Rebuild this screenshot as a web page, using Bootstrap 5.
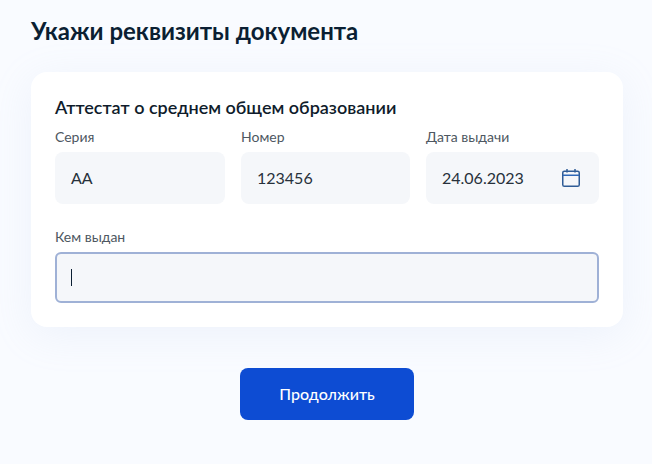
<!DOCTYPE html>
<html lang="ru">
<head>
<meta charset="utf-8">
<title>Реквизиты документа</title>
<link href="https://cdn.jsdelivr.net/npm/bootstrap@5.3.0/dist/css/bootstrap.min.css" rel="stylesheet">
<style>
html, body { height: 100%; }
body { background: #f9fbff; font-family: Lato, "Noto Sans", sans-serif; color: #0b1f33; overflow: hidden; }
.page-wrap { padding: 16px 29px 0 31px; }
.page-title { font-size: 24px; font-weight: 700; line-height: 30px; margin: 0 0 26px; color: #0b1f33; }
.doc-card { background: #fff; border-radius: 16px; padding: 24px; height: 255px; box-shadow: 0 8px 40px rgba(171,190,230,.14); }
.doc-title { font-size: 18px; font-weight: 600; line-height: 22px; margin: 0 0 10px; color: #0f1c2b; }
.fld-label { display: block; font-size: 14px; line-height: 18px; margin: 0 0 6px; color: #4d5761; }
.fld-input { height: 52px; background: #f5f7fa; border-radius: 8px; padding: 0 19px 0 16px; font-size: 16px; color: #27313b; display: flex; align-items: center; justify-content: space-between; }
.col-a { flex: 170 1 0; }
.col-b { flex: 169 1 0; }
.col-c { flex: 173 1 0; }
.fld-focus { height: 51px; background: #f5f7fa; border: 2px solid #9fb1d6; border-radius: 6px; padding: 0 14px; display: flex; align-items: center; }
.text-caret { display: block; width: 1px; height: 17px; background: #0b1f33; }
.row-gap { margin-bottom: 24px; }
.cal-icon { width: 18px; height: 18px; display: block; }
.go-btn { width: 174px; height: 52px; background: #0d4cd3; border: 0; border-radius: 8px; color: #fff; font-size: 16px; font-weight: 500; font-family: inherit; margin-top: 41px; }
.go-btn:hover { background: #0d4cd3; color: #fff; }
</style>
</head>
<body>
<div class="page-wrap">
  <h1 class="page-title">Укажи реквизиты документа</h1>
  <div class="doc-card">
    <h2 class="doc-title">Аттестат о среднем общем образовании</h2>
    <div class="d-flex gap-3 row-gap">
      <div class="col-a">
        <label class="fld-label">Серия</label>
        <div class="fld-input">АА</div>
      </div>
      <div class="col-b">
        <label class="fld-label">Номер</label>
        <div class="fld-input">123456</div>
      </div>
      <div class="col-c">
        <label class="fld-label">Дата выдачи</label>
        <div class="fld-input">
          <span>24.06.2023</span>
          <svg class="cal-icon" viewBox="0 0 18 18" fill="none" aria-hidden="true">
            <rect x="0.75" y="2.25" width="16.5" height="15" rx="1.6" stroke="#2f5c96" stroke-width="1.5"/>
            <path d="M1 6.25H17" stroke="#2f68b8" stroke-width="1.5"/>
            <path d="M5 0V3.5M13 0V3.5" stroke="#2f5c96" stroke-width="1.5"/>
          </svg>
        </div>
      </div>
    </div>
    <label class="fld-label">Кем выдан</label>
    <div class="fld-focus"><span class="text-caret"></span></div>
  </div>
  <div class="d-flex justify-content-center">
    <button type="button" class="btn go-btn">Продолжить</button>
  </div>
</div>
<script src="https://cdn.jsdelivr.net/npm/bootstrap@5.3.0/dist/js/bootstrap.bundle.min.js"></script>
</body>
</html>
